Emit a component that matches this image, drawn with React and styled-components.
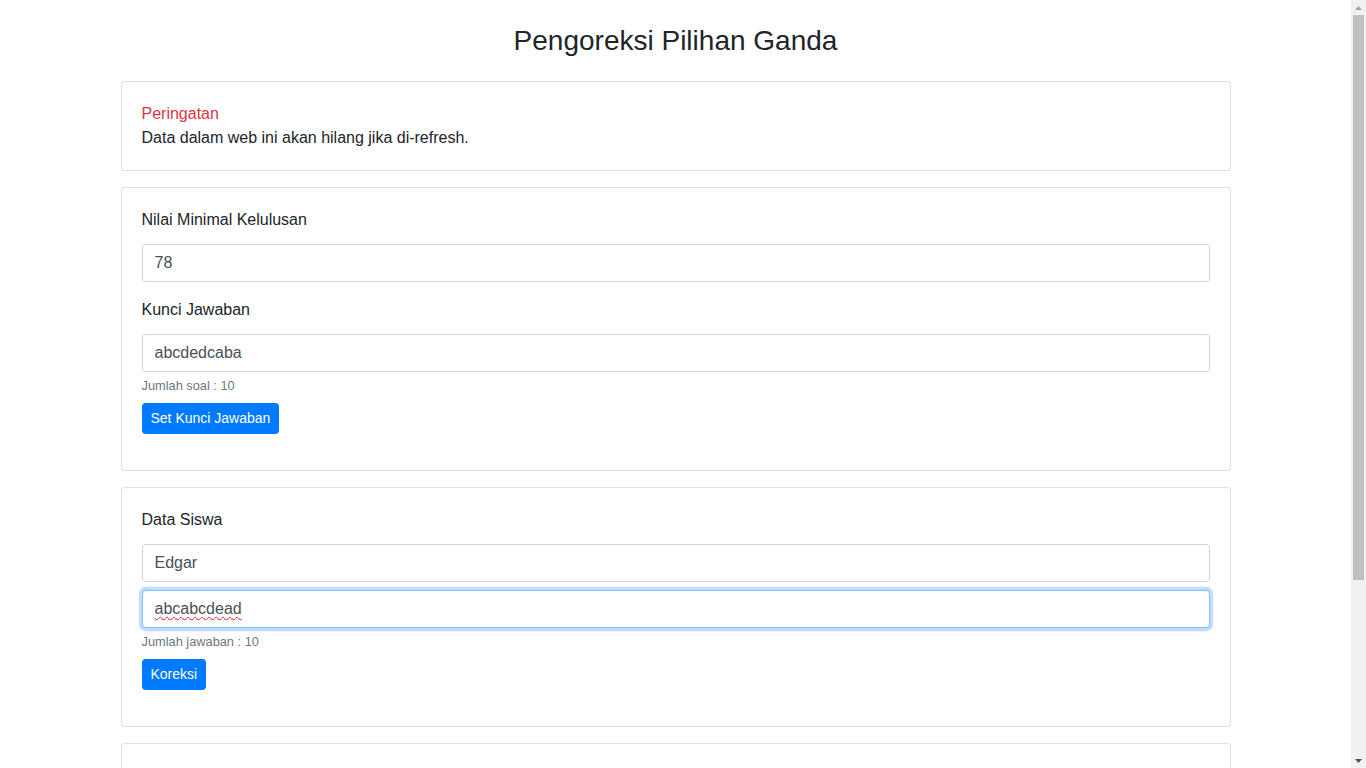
import React from "react";
import styled, { createGlobalStyle } from "styled-components";

function App() {
  return (
    <>
      <GlobalStyle />
      <Page>
        <Container>
          <Title>Pengoreksi Pilihan Ganda</Title>

          <Card>
            <CardBody>
              <WarningTitle>Peringatan</WarningTitle>
              <Text>Data dalam web ini akan hilang jika di-refresh.</Text>
            </CardBody>
          </Card>

          <Card>
            <CardBody>
              <FormGroup>
                <Label>Nilai Minimal Kelulusan</Label>
                <Input type="number" defaultValue="78" />
              </FormGroup>
              <FormGroup>
                <Label>Kunci Jawaban</Label>
                <Input type="text" defaultValue="abcdedcaba" spellCheck={false} />
                <Hint>Jumlah soal : 10</Hint>
              </FormGroup>
              <FormGroup>
                <Button>Set Kunci Jawaban</Button>
              </FormGroup>
            </CardBody>
          </Card>

          <Card>
            <CardBody>
              <FormGroup>
                <Label>Data Siswa</Label>
                <Input type="text" defaultValue="Edgar" spellCheck={false} stacked />
                <InputWrap>
                  <Input type="text" defaultValue="abcabcdead" spellCheck={false} focused />
                  <Squiggle aria-hidden="true">abcabcdead</Squiggle>
                </InputWrap>
                <Hint>Jumlah jawaban : 10</Hint>
              </FormGroup>
              <FormGroup>
                <Button>Koreksi</Button>
              </FormGroup>
            </CardBody>
          </Card>

          <Card>
            <CardBody>
              <Label>Hasil Koreksi</Label>
              <Table>
                <thead>
                  <tr>
                    <Th>No</Th>
                    <Th>Nama</Th>
                    <Th>Jawaban</Th>
                    <Th>Benar</Th>
                    <Th>Nilai</Th>
                    <Th>Keterangan</Th>
                  </tr>
                </thead>
                <tbody>
                  <tr>
                    <Td colSpan={6}>Belum ada data</Td>
                  </tr>
                </tbody>
              </Table>
            </CardBody>
          </Card>
        </Container>
      </Page>

      <Scrollbar aria-hidden="true">
        <ScrollArrow>
          <svg width="7" height="4" viewBox="0 0 7 4">
            <path d="M0 4 L3.5 0 L7 4 Z" fill="#a3a3a3" />
          </svg>
        </ScrollArrow>
        <ScrollTrack>
          <ScrollThumb />
        </ScrollTrack>
        <ScrollArrow>
          <svg width="7" height="4" viewBox="0 0 7 4">
            <path d="M0 0 L7 0 L3.5 4 Z" fill="#505050" />
          </svg>
        </ScrollArrow>
      </Scrollbar>
    </>
  );
}

const GlobalStyle = createGlobalStyle`
  html, body {
    margin: 0;
    padding: 0;
    background: #fff;
  }

  body {
    font-family: "Liberation Sans", Arial, sans-serif;
    font-size: 16px;
    line-height: 1.5;
    color: #212529;
  }

  * {
    box-sizing: border-box;
  }
`;

// layout
const Page = styled.div`
  padding-right: 15px;
`;

const Container = styled.div`
  max-width: 1140px;
  margin: 0 auto;
  padding: 0 15px 16px;
`;

const Title = styled.h3`
  margin: 24px 0 23px;
  font-size: 28px;
  font-weight: 500;
  line-height: 1.2;
  text-align: center;
`;

// cards
const Card = styled.div`
  border: 1px solid rgba(0, 0, 0, 0.125);
  border-radius: 4px;
  background: #fff;
  margin-bottom: 16px;
`;

const CardBody = styled.div`
  padding: 20px;
`;

const WarningTitle = styled.div`
  color: #dc3545;
`;

const Text = styled.div``;

// form
const FormGroup = styled.div`
  margin-bottom: 16px;
`;

const Label = styled.label`
  display: block;
  margin-bottom: 12px;
`;

const InputWrap = styled.div`
  position: relative;
`;

const Input = styled.input`
  display: block;
  width: 100%;
  height: 38px;
  padding: 6px 12px;
  margin-bottom: ${({ stacked }) => (stacked ? "8px" : "0")};
  font-family: inherit;
  font-size: 16px;
  line-height: 1.5;
  color: #495057;
  background: #fff;
  border: 1px solid ${({ focused }) => (focused ? "#80bdff" : "#ced4da")};
  border-radius: 4px;
  box-shadow: ${({ focused }) =>
    focused ? "0 0 0 3.2px rgba(0, 123, 255, 0.25)" : "none"};
  outline: none;
  -moz-appearance: textfield;

  &::-webkit-outer-spin-button,
  &::-webkit-inner-spin-button {
    -webkit-appearance: none;
    margin: 0;
  }
`;

// spell-check squiggle drawn over the focused input
const Squiggle = styled.span`
  position: absolute;
  left: 13px;
  top: 7px;
  font-size: 16px;
  line-height: 24px;
  color: transparent;
  pointer-events: none;
  text-decoration: underline wavy #e02020;
  text-decoration-thickness: 1px;
  text-underline-offset: 2px;
`;

const Hint = styled.small`
  display: block;
  margin-top: 4px;
  margin-bottom: -8px;
  font-size: 12.8px;
  line-height: 1.5;
  color: #6c757d;
`;

const Button = styled.button`
  display: inline-block;
  padding: 4px 8px;
  font-family: inherit;
  font-size: 14px;
  line-height: 1.5;
  color: #fff;
  background: #007bff;
  border: 1px solid #007bff;
  border-radius: 3.2px;
  cursor: pointer;
`;

// results table
const Table = styled.table`
  width: 100%;
  border-collapse: collapse;
  margin-bottom: 140px;
`;

const Th = styled.th`
  text-align: left;
  padding: 12px;
  border-top: 1px solid #dee2e6;
  border-bottom: 2px solid #dee2e6;
`;

const Td = styled.td`
  padding: 12px;
  border-top: 1px solid #dee2e6;
  text-align: center;
`;

// window scrollbar
const Scrollbar = styled.div`
  position: fixed;
  top: 0;
  right: 0;
  bottom: 0;
  width: 15px;
  display: flex;
  flex-direction: column;
  background: #f1f1f1;
`;

const ScrollArrow = styled.div`
  height: 15px;
  display: flex;
  align-items: center;
  justify-content: center;
`;

const ScrollTrack = styled.div`
  flex: 1;
  padding: 0 2px;
`;

const ScrollThumb = styled.div`
  height: 565px;
  background: #c1c1c1;
`;

export default App;
